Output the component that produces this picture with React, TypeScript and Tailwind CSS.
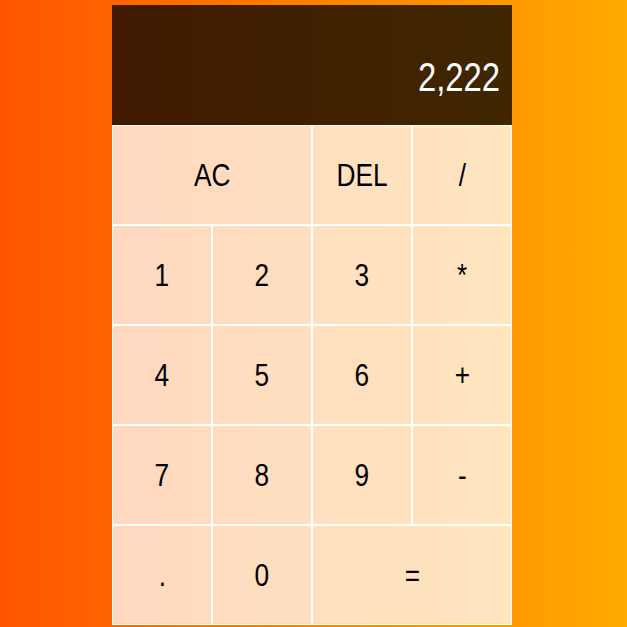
import * as React from "react"

const keys: { label: string; wide?: boolean }[] = [
  { label: "AC", wide: true },
  { label: "DEL" },
  { label: "/" },
  { label: "1" },
  { label: "2" },
  { label: "3" },
  { label: "*" },
  { label: "4" },
  { label: "5" },
  { label: "6" },
  { label: "+" },
  { label: "7" },
  { label: "8" },
  { label: "9" },
  { label: "-" },
  { label: "." },
  { label: "0" },
  { label: "=", wide: true },
]

export default function App() {
  return (
    <div className="min-h-screen bg-[linear-gradient(to_right,#ff5500,#ffaa00)] pt-[5px] pl-[112px] font-['Liberation_Sans',Arial,sans-serif]">
      <div className="grid grid-cols-[repeat(4,100px)] grid-rows-[minmax(120px,auto)_repeat(5,100px)]">
        <div className="col-span-4 flex flex-col items-end justify-around break-all bg-black/75 p-3">
          <div className="text-[1.5rem] leading-[normal] text-white/75"></div>
          <div className="origin-right scale-x-[0.82] text-[2.5rem] leading-[normal] text-white">
            2,222
          </div>
        </div>
        {keys.map((k) => (
          <button
            key={k.label}
            className={
              k.wide
                ? "col-span-2 cursor-pointer border border-white bg-white/75 text-[2rem] leading-[normal] text-black outline-none"
                : "cursor-pointer border border-white bg-white/75 text-[2rem] leading-[normal] text-black outline-none"
            }
          >
            <span className="inline-block scale-x-[0.82]">{k.label}</span>
          </button>
        ))}
      </div>
    </div>
  )
}
